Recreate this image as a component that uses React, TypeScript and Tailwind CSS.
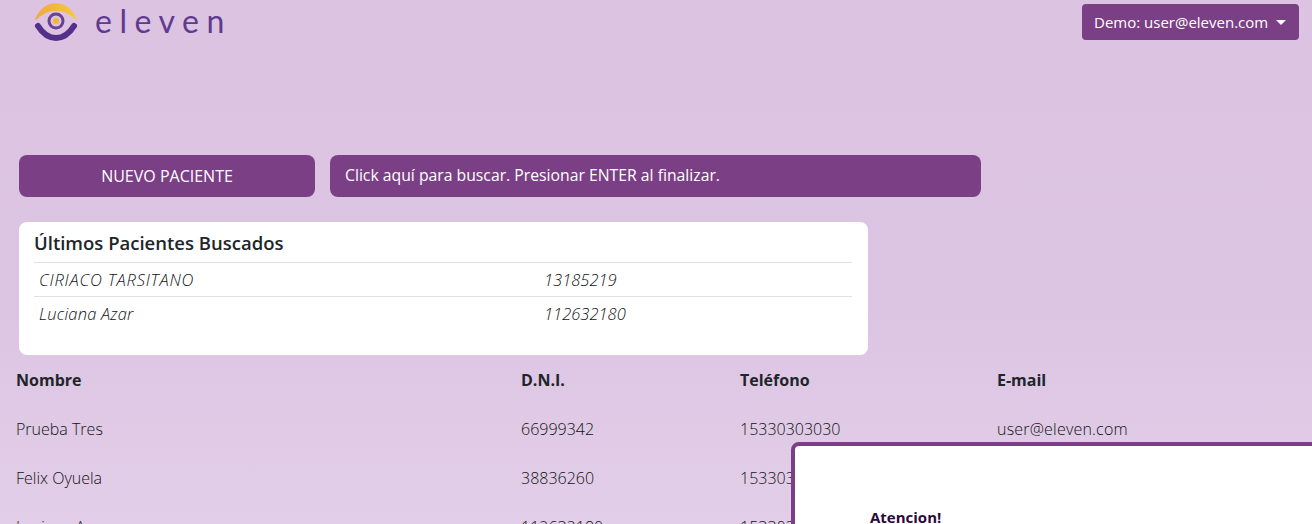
import React from 'react';

const recientes = [
  { nombre: 'CIRIACO TARSITANO', numero: '13185219', nombreClass: 'tracking-[0.8px]' },
  { nombre: 'Luciana Azar', numero: '112632180', nombreClass: 'tracking-[0.2px]' },
];

const pacientes = [
  { nombre: 'Prueba Tres', dni: '66999342', telefono: '15330303030', email: 'user@eleven.com' },
  { nombre: 'Felix Oyuela', dni: '38836260', telefono: '15330303030', email: 'user@eleven.com' },
  { nombre: 'Luciana Azar', dni: '112632180', telefono: '15330303030', email: 'user@eleven.com' },
];

const Logo: React.FC = () => (
  <div className="flex items-center">
    <svg width="46" height="42" viewBox="0 0 46 42" className="mr-[16px]">
      <defs>
        <linearGradient id="arco" x1="0" y1="0" x2="1" y2="0">
          <stop offset="0" stopColor="#f0a93a" />
          <stop offset="1" stopColor="#f5c93f" />
        </linearGradient>
      </defs>
      <path d="M3 19 C8 8 15 4 23 4 C31 4 38 8 43 19 C37 13 30 10 23 10 C16 10 9 13 3 19 Z" fill="url(#arco)" stroke="url(#arco)" strokeWidth="1.5" strokeLinejoin="round" />
      <path d="M5 26 C10 34 16 38 23 38 C30 38 36 34 41 26" fill="none" stroke="#55308a" strokeWidth="6" strokeLinecap="round" />
      <circle cx="23" cy="21" r="7" fill="none" stroke="#6b3f94" strokeWidth="3" />
      <circle cx="23" cy="21" r="3" fill="#f2b632" />
    </svg>
    <span className="font-['Lato',sans-serif] text-[32px] font-normal leading-none tracking-[7.5px] text-[#5f3a8f]">eleven</span>
  </div>
);

export default function App() {
  return (
    <div className="relative h-[524px] overflow-hidden bg-gradient-to-b from-[#dbc3e1] via-[#dcc5e2] via-60% to-[#e3cee9] font-['Open_Sans',sans-serif] text-base text-[#212529]">
      <header className="flex h-[155px] items-start justify-between pl-[33px] pr-[13px]">
        <Logo />
        <button className="mt-1 flex h-9 w-[217px] items-center rounded bg-[#7b3f85] pl-3 text-[15px] text-white">
          Demo: user@eleven.com
          <span className="ml-2 h-0 w-0 border-x-[5px] border-t-[5px] border-x-transparent border-t-white" />
        </button>
      </header>

      <div className="ml-[19px] flex gap-[15px]">
        <button className="h-[42px] w-[296px] rounded-lg bg-[#7b3f85] text-base text-white">NUEVO PACIENTE</button>
        <div className="flex h-[42px] w-[651px] items-center rounded-lg bg-[#7b3f85] px-[15px] text-[15.75px] text-white">
          Click aquí para buscar. Presionar ENTER al finalizar.
        </div>
      </div>

      <section className="ml-[19px] mt-[25px] h-[133px] w-[849px] rounded-lg bg-white pl-[15px] pr-4 pt-2">
        <h2 className="h-8 text-[18.5px] font-semibold leading-[26px]">Últimos Pacientes Buscados</h2>
        {recientes.map((r) => (
          <div key={r.numero} className="flex h-[34px] items-center border-t border-[#dee2e6] pl-[5px] pt-px text-[16.5px] font-light italic text-[#111315]">
            <span className={`w-[505px] ${r.nombreClass}`}>{r.nombre}</span>
            <span>{r.numero}</span>
          </div>
        ))}
      </section>

      <table className="w-full table-fixed text-base">
        <thead>
          <tr className="h-[49px] text-left">
            <th className="w-[521px] pl-4 font-bold">Nombre</th>
            <th className="w-[219px] font-bold">D.N.I.</th>
            <th className="w-[257px] font-bold">Teléfono</th>
            <th className="font-bold">E-mail</th>
          </tr>
        </thead>
        <tbody className="font-light text-[#111315]">
          {pacientes.map((p) => (
            <tr key={p.dni} className="h-[49px]">
              <td className="pl-4">{p.nombre}</td>
              <td>{p.dni}</td>
              <td>{p.telefono}</td>
              <td className="tracking-[0.2px]">{p.email}</td>
            </tr>
          ))}
        </tbody>
      </table>

      <div className="absolute left-[791px] top-[442px] h-[200px] w-[600px] rounded-lg border-4 border-[#7b3f85] bg-white pl-[75px] pt-[61px]">
        <p className="text-[15px] font-bold leading-5 text-[#2d0a3a]">Atencion!</p>
      </div>
    </div>
  );
}
